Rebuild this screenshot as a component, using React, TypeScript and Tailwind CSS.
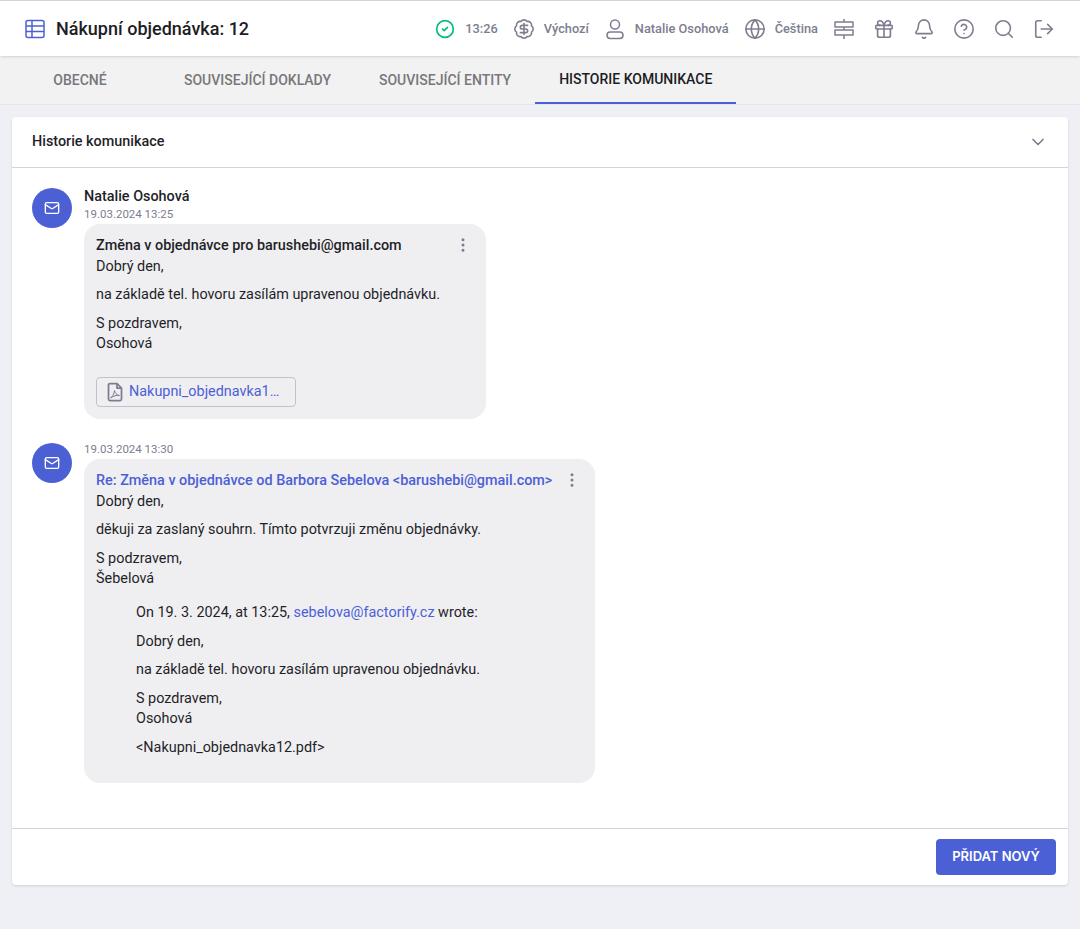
import { Bell, ChevronDown, CircleCheck, CircleHelp, EllipsisVertical, Gift, Globe, LogOut, Mail, Search, BadgeDollarSign } from "lucide-react";

const tabs = ["OBECNÉ", "SOUVISEJÍCÍ DOKLADY", "SOUVISEJÍCÍ ENTITY", "HISTORIE KOMUNIKACE"];

function TableIcon() {
    return (
        <svg width="22" height="20" viewBox="0 0 22 20" fill="none" stroke="#4c60d6" strokeWidth="1.5">
            <rect x="2" y="1.500" width="18" height="17" rx="2" />
            <path d="M2 7h18M2 12.500h18M8 1.500v17" />
        </svg>
    );
}

function SignIcon() {
    return (
        <svg width="24" height="24" viewBox="0 0 24 24" fill="none" stroke="#7d7d90" strokeWidth="1.5" strokeLinejoin="round">
            <path d="M12 2v3M12 10v3M12 18v4" />
            <path d="M3 5h18v5H3zM3 13h18v5H3z" />
        </svg>
    );
}

function UserIcon() {
    return (
        <svg width="24" height="24" viewBox="0 0 24 24" fill="none" stroke="#7d7d90" strokeWidth="1.5">
            <circle cx="12" cy="7.500" r="4.500" />
            <rect x="4" y="15" width="16" height="6.500" rx="3.200" />
        </svg>
    );
}

function PdfIcon() {
    return (
        <svg className="shrink-0" width="16" height="20" viewBox="0 0 16 20" fill="none" stroke="#7d7d90" strokeWidth="1.750" strokeLinejoin="round">
            <path d="M10 1.500H3A1.500 1.500 0 0 0 1.500 3v14A1.500 1.500 0 0 0 3 18.500h10a1.500 1.500 0 0 0 1.500-1.500V6z" />
            <path d="M10 1.500V6h4.500" />
            <path strokeWidth="1" d="M3.500 16c2-1 3.500-4 4-7.500.5 2.500 2 4.500 5 5-3-.5-6 .5-9 2.500z" />
        </svg>
    );
}

function Avatar() {
    return (
        <div className="flex h-10 w-10 shrink-0 items-center justify-center rounded-full bg-[#4c60d6]">
            <Mail size={16} className="text-white" />
        </div>
    );
}

function IconBox({ children }: { children: React.ReactNode }) {
    return <div className="flex h-6 w-6 items-center justify-center">{children}</div>;
}

function StatusItem({ icon, label }: { icon: React.ReactNode; label: string }) {
    return (
        <div className="flex items-center gap-2">
            <IconBox>{icon}</IconBox>
            <span className="text-[12.8px] font-medium text-[#7d7d90]">{label}</span>
        </div>
    );
}

export default function App() {
    const iconClass = "text-[#7d7d90]";
    return (
        <div className="flex min-h-[929px] flex-col bg-[#eff0f5] text-[#1f1f28]" style={{ fontFamily: "Roboto, sans-serif" }}>
            <header className="relative flex h-14 items-center justify-between border-t border-gray-300 bg-white px-6 shadow">
                <div className="flex items-center gap-2.5">
                    <TableIcon />
                    <h1 className="text-lg font-medium text-[#1d1d24]">Nákupní objednávka: 12</h1>
                </div>
                <div className="flex items-center gap-3.5">
                    <StatusItem icon={<CircleCheck size={20} className="text-emerald-500" strokeWidth={2} />} label="13:26" />
                    <StatusItem icon={<BadgeDollarSign size={22} className={iconClass} strokeWidth={1.75} />} label="Výchozí" />
                    <StatusItem icon={<UserIcon />} label="Natalie Osohová" />
                    <StatusItem icon={<Globe size={22} className={iconClass} strokeWidth={1.75} />} label="Čeština" />
                    <div className="flex items-center gap-4">
                        <SignIcon />
                        <IconBox><Gift size={22} className={iconClass} strokeWidth={1.75} /></IconBox>
                        <IconBox><Bell size={22} className={iconClass} strokeWidth={1.75} /></IconBox>
                        <IconBox><CircleHelp size={22} className={iconClass} strokeWidth={1.75} /></IconBox>
                        <IconBox><Search size={22} className={iconClass} strokeWidth={1.75} /></IconBox>
                        <IconBox><LogOut size={22} className={iconClass} strokeWidth={1.75} /></IconBox>
                    </div>
                </div>
            </header>

            <nav className="flex h-12.25 items-stretch border-b border-gray-200 bg-[#f2f2f2] text-sm">
                {tabs.map((t, i) => (
                    <div
                        key={t}
                        className={
                            i === 3
                                ? "flex items-center justify-center border-b-2 border-[#4c60d6] px-6 font-medium text-[#1d1d24]"
                                : "flex min-w-40 items-center justify-center px-6 font-medium text-[#77777c]"
                        }
                    >
                        {t}
                    </div>
                ))}
            </nav>

            <main className="mx-3 mt-3 rounded bg-white text-[14.4px] leading-[1.43] shadow-sm">
                <div className="flex h-12.75 items-center justify-between border-b border-gray-300 px-5">
                    <span className="font-medium">Historie komunikace</span>
                    <ChevronDown size={20} className={iconClass} />
                </div>

                <div className="flex flex-col gap-6 px-5 pt-5 pb-11.25">
                    <div className="flex gap-3">
                        <Avatar />
                        <div className="flex flex-col items-start">
                            <span className="font-medium leading-4.5">Natalie Osohová</span>
                            <span className="mt-0.5 mb-1 text-[11.5px] leading-3 text-[#7d7d90]">19.03.2024 13:25</span>
                            <div className="relative flex w-[402px] flex-col rounded-2xl bg-[#efeff2] px-3 pt-3 pb-3">
                                <EllipsisVertical size={18} className="absolute right-3.5 top-3 text-[#7d7d90]" />
                                <span className="font-medium">Změna v objednávce pro barushebi@gmail.com</span>
                                <p>Dobrý den,</p>
                                <p className="mt-2">na základě tel. hovoru zasílám upravenou objednávku.</p>
                                <p className="mt-2">S pozdravem,<br />Osohová</p>
                                <div className="mt-5.5 flex h-7.5 w-50 items-center gap-1.5 rounded border border-[#c0c1cf] px-2.5 text-[#4c60d6]">
                                    <PdfIcon />
                                    <span className="truncate">Nakupni_objednavka12.pdf</span>
                                </div>
                            </div>
                        </div>
                    </div>

                    <div className="flex gap-3">
                        <Avatar />
                        <div className="flex flex-col items-start">
                            <span className="mb-1 text-[11.5px] leading-3 text-[#7d7d90]">19.03.2024 13:30</span>
                            <div className="relative flex flex-col rounded-2xl bg-[#efeff2] px-3 pt-3 pb-6">
                                <EllipsisVertical size={18} className="absolute right-3.5 top-3 text-[#7d7d90]" />
                                <span className="pr-7.75 font-medium text-[#4c60d6]">Re: Změna v objednávce od Barbora Sebelova &lt;barushebi@gmail.com&gt;</span>
                                <p>Dobrý den,</p>
                                <p className="mt-2">děkuji za zaslaný souhrn. Tímto potvrzuji změnu objednávky.</p>
                                <p className="mt-2">S podzravem,<br />Šebelová</p>
                                <div className="mt-3.25 pl-10">
                                    <p>On 19. 3. 2024, at 13:25, <span className="text-[#4c60d6]">sebelova@factorify.cz</span> wrote:</p>
                                    <p className="mt-2">Dobrý den,</p>
                                    <p className="mt-2">na základě tel. hovoru zasílám upravenou objednávku.</p>
                                    <p className="mt-2">S pozdravem,<br />Osohová</p>
                                    <p className="mt-2">&lt;Nakupni_objednavka12.pdf&gt;</p>
                                </div>
                            </div>
                        </div>
                    </div>
                </div>

                <div className="flex justify-end border-t border-gray-300 px-3 py-2.5">
                    <button className="h-9 w-30 rounded bg-[#4c60d6] text-[13px] font-semibold text-white" style={{ fontFamily: "Inter, sans-serif" }}>PŘIDAT NOVÝ</button>
                </div>
            </main>
        </div>
    );
}
